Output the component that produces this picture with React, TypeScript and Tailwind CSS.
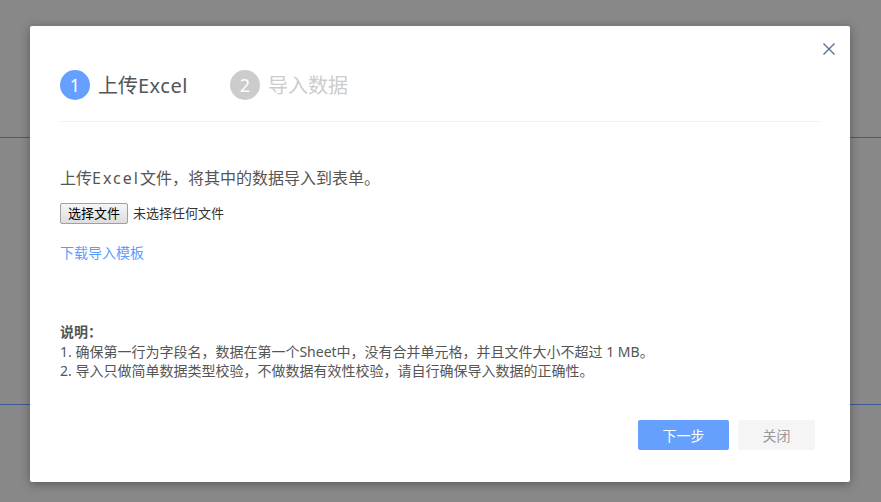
import React from "react";

const font = { fontFamily: '"Noto Sans", "Noto Sans CJK SC", sans-serif' };

export default function App() {
  return (
    <div className="relative h-[502px] w-full overflow-hidden bg-[#888888]" style={font}>
      {/* background page lines under the overlay */}
      <div className="pt-[137px]">
        <div className="h-[268px] border-y border-[#3d5a95]" />
      </div>

      {/* modal */}
      <div className="absolute left-[30px] top-[26px] flex h-[456px] w-[820px] flex-col rounded-[2px] bg-white shadow-[0_2px_10px_rgba(0,0,0,0.35)]">
        <button className="absolute right-[15px] top-[17px] flex h-[12px] w-[12px] items-center justify-center">
          <svg width="12" height="12" viewBox="0 0 12 12" fill="none">
            <path d="M0.5 0.5L11.5 11.5M11.5 0.5L0.5 11.5" stroke="#5d6f96" strokeWidth="1.4" />
          </svg>
        </button>

        <div className="px-[30px] pt-[44px]">
          <div className="flex h-[30px] items-center">
            <div className="flex w-[170px] items-center gap-[8px]">
              <div className="flex h-[30px] w-[30px] items-center justify-center rounded-full bg-[#66a0ff] text-[18px] leading-none text-white">
                1
              </div>
              <span className="pt-[2px] text-[20px] leading-[30px] text-[#555555]">
                上传<span className="tracking-[0.5px]">Excel</span>
              </span>
            </div>
            <div className="flex items-center gap-[8px]">
              <div className="flex h-[30px] w-[30px] items-center justify-center rounded-full bg-[#cccccc] text-[18px] leading-none text-white">
                2
              </div>
              <span className="pt-[2px] text-[20px] leading-[30px] text-[#cccccc]">导入数据</span>
            </div>
          </div>
          <div className="mt-[21px] border-t border-[#f0f0f0]" />

          <p className="mt-[44px] text-[16px] leading-[24px] text-[#555555]">
            上传<span className="tracking-[2px]">Excel</span>文件，将其中的数据导入到表单。
          </p>

          <div className="mt-[13px] flex items-center gap-[5px]">
            <span className="flex h-[21px] w-[68px] items-center justify-center rounded-[2px] border border-[#a0a0a0] bg-gradient-to-b from-[#f6f6f6] to-[#dddddd] text-[13px] leading-none text-black">
              选择文件
            </span>
            <span className="text-[13px] leading-[21px] text-[#333333]">未选择任何文件</span>
          </div>

          <a className="mt-[19px] block text-[14px] leading-[20px] text-[#5c9cff]">下载导入模板</a>

          <div className="mt-[59px] text-[14px] leading-[19.5px] text-[#555555]">
            <div className="font-bold">说明：</div>
            <div>1. 确保第一行为字段名，数据在第一个Sheet中，没有合并单元格，并且文件大小不超过 1 MB。</div>
            <div>2. 导入只做简单数据类型校验，不做数据有效性校验，请自行确保导入数据的正确性。</div>
          </div>
        </div>

        <div className="mt-auto flex justify-end gap-[9px] pb-[32px] pr-[35px]">
          <button className="h-[30px] w-[91px] rounded-[2px] bg-[#66a0ff] text-[14px] text-white">下一步</button>
          <button className="h-[30px] w-[77px] rounded-[2px] bg-[#f5f5f5] text-[14px] text-[#999999]">关闭</button>
        </div>
      </div>
    </div>
  );
}
